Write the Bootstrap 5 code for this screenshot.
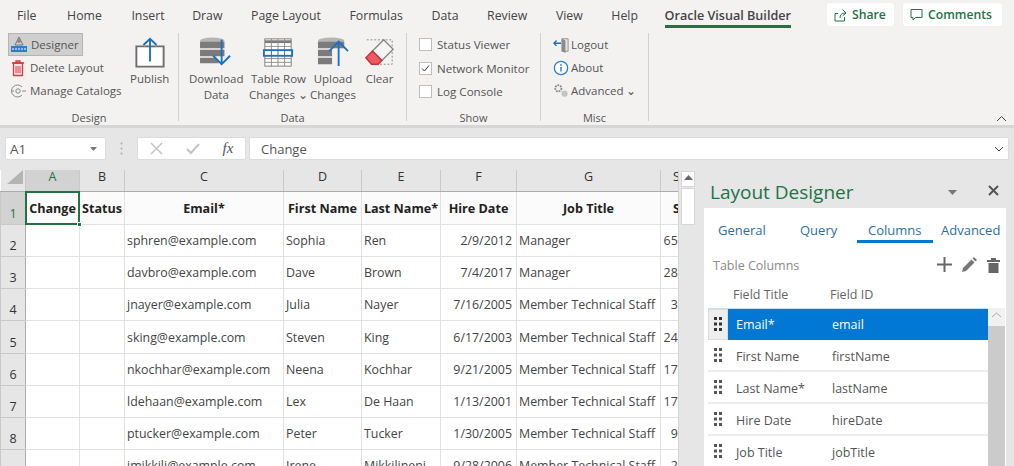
<!DOCTYPE html>
<html lang="en">
<head>
<meta charset="utf-8">
<title>Oracle Visual Builder</title>
<link href="https://cdn.jsdelivr.net/npm/bootstrap@5.3.0/dist/css/bootstrap.min.css" rel="stylesheet">
<style>
html,body{height:466px;overflow:hidden;background:#e6e6e6}
body{font-family:"Open Sans","Noto Sans",sans-serif;font-size:12.5px;color:#444;width:1014px}
.rb{background:#f3f2f1;height:125px;position:relative}
.tabrow{height:32px;padding-left:17px;gap:28.6px;font-size:12.3px;color:#444}
.tabitem{line-height:31px;white-space:nowrap}
.tabitem:nth-child(2){margin-left:2px}
.tabitem:nth-child(3){margin-left:1px}
.tabitem:nth-child(4){margin-left:-1px}
.tabactive{font-weight:600;position:relative;font-size:12.6px;color:#444;margin-left:-2px}
.tabactive::after{content:"";position:absolute;left:0;right:0;top:25px;height:3px;background:#217346}
.topbtn{position:absolute;top:3px;height:23px;background:#fff;border-radius:2px;color:#217346;font-weight:600;font-size:12.2px;gap:5px;padding:0 0 0 7px;line-height:23px;box-shadow:0 0 1px #ddd}
.b-share{left:827px;width:67px}
.b-comm{left:903px;width:99px}
.groups{height:93px}
.grp{height:88px;margin-top:1px;border-right:1px solid #d1d1d1;position:relative;flex:none}
.g1{width:179px}.g2{width:228px}.g3{width:134px}.g4{width:108px}
.glabel{position:absolute;left:0;right:0;top:78px;text-align:center;font-size:11px;color:#555;line-height:14px}
.sm{height:23px;line-height:23px;white-space:nowrap;gap:3px;font-size:11.5px;color:#555}
.smon{background:#cfcfcf;border:1px solid #b4b4b4;width:75px;height:23px;line-height:21px;padding-left:1px;margin-left:8px}
.smoff{margin-left:9px}
.smisc{margin-left:12px;gap:2px}
.big{position:absolute;top:2px;text-align:center;line-height:16px;font-size:11.5px;color:#555;white-space:nowrap}
.big svg{display:block;height:31px;margin:2px auto 3px}
.chk{width:13px;height:13px;border:1px solid #bdbdbd;background:#fff;margin:0 5px 0 12px;flex:none;display:block}
.chkrow{height:23.5px;color:#555;font-size:11.6px;white-space:nowrap}
.rbshadow{height:3px;background:#d6d6d6}
.fbar{height:42px;background:#e6e6e6;position:relative}
.fbox{position:absolute;top:9px;height:23px;background:#fff;border:1px solid #dcdcdc;border-radius:2px;line-height:21px;font-size:13px;color:#555}
.f-name{left:5px;width:101px;padding:1px 0 0 4px;font-size:13.5px}
.f-fx{left:137px;width:109px}
.f-val{left:249px;width:760px;padding:1px 0 0 11px}
.fdots{position:absolute;left:120px;top:14px}
.fxlabel{font-family:"Liberation Serif",serif;font-style:italic;font-size:15px;color:#555}
.main{height:296px}
.sheetwrap{width:678px;height:296px;overflow:hidden;flex:none;background:#fff}
.sheet{table-layout:fixed;border-collapse:collapse;width:706px;font-size:12.4px;color:#444;margin:0}
.sheet th,.sheet td{border:1px solid #e1e1e1;padding:0 2px;white-space:nowrap;overflow:hidden;background:#fff;color:#444;box-shadow:none}
.c0{width:25px}.c1{width:54px}.c2{width:45px}.c3{width:159px}.c4{width:78px}.c5{width:79px}.c6{width:76px}.c7{width:144px}.c8{width:46px}
.sheet .hh th{height:21px;background:#e6e6e6;font-weight:400;text-align:center;border-color:#c9c9c9;border-width:0 1px 1px 0;font-size:12.5px;color:#333;line-height:14px;border-bottom:1px solid #ababab}
.sheet .hh .acol{background:#d2d2d2;color:#217346}
.sheet th.rn{background:#e6e6e6;font-weight:400;text-align:center;vertical-align:bottom;color:#333;border-color:#c9c9c9;padding:0;padding-bottom:1px;border-right:1px solid #ababab;line-height:18px;font-size:12.5px}
.sheet th.rna{background:#d2d2d2;color:#217346}
.sheet .r1 td{height:33px;font-weight:700;color:#222;text-align:center;font-size:12.6px;background:#fbfbfb;vertical-align:middle;padding-top:3px;padding-left:1px;padding-right:1px}
.sheet .rr td{height:32px;vertical-align:top;padding-top:7px;line-height:18px}
.sheet .rr:nth-child(6) td{height:33px;padding-top:8px}
.sheet .num{text-align:right;padding-right:4px}
.sheet .sal{padding-left:0;padding-right:7px;text-align:right}
.sheet .salh{text-align:left!important;padding-left:12px}
.sheet .r1 .salh{padding-left:12px}
.sheet .csel{position:relative;overflow:visible}
.sheet .csel::after{content:"";position:absolute;inset:-1px;border:2px solid #217346}
.sheet .csel::before{content:"";position:absolute;right:-3px;bottom:-3px;width:5px;height:5px;background:#217346;border:1px solid #fff;z-index:2}
.vbar{width:19px;flex:none;background:#e6e6e6;border-left:1px solid #d4d4d4;position:relative}
.vup{height:16px;margin:1px 2px 0;background:#fff;border:1px solid #d6d6d6;text-align:center;line-height:10px}
.vth{height:37px;margin:1px 2px 0;background:#fff;border:1px solid #d6d6d6}
.pane{width:317px;flex:none;background:#e6e6e6;position:relative;padding-left:7px}
.ptitle{height:38px;color:#217346;font-size:19px;line-height:44px;padding-left:6px;position:relative;margin-left:0}
.pmenu{position:absolute;left:244px;top:20px}
.pclose{position:absolute;left:284px;top:15px}
.pbody{background:#fff;width:302px;height:258px;padding:0 0 0 4px}
.ptabs{height:40px;color:#2a6f9f;font-size:13px;position:relative}
.ptab{position:absolute;top:11px;line-height:22px}
.ptabon{position:absolute;left:149px;top:32px;width:76px;height:3px;background:#0078d4}
.ptsub{height:31px;position:relative;color:#8a8a8a;font-size:12.5px;line-height:36px;padding-left:5px}
.ptools{position:absolute;left:229px;top:8px;gap:9px}
.pthead{height:29px;color:#666;position:relative;font-size:12.5px;line-height:32px}
.pthead span,.lrow span{position:absolute}
.pth1{left:25px}.pth2{left:122px}
.lwrap{width:297px;height:160px;position:relative;overflow:hidden}
.lst{width:280px}
.lrow{height:32px;position:relative;border-bottom:2px solid #ececec;line-height:34px;font-size:12.5px;color:#555}
.lgrip{position:absolute;left:6px;top:8px}
.lrow .t1{left:28px}.lrow .t2{left:124px}
.lsel{background:#0078d4;color:#fff;border-bottom:0;border-top:1px solid #c6dff2;line-height:31px}
.lsel .gbox{position:absolute;left:0;top:0;width:20px;height:31px;background:#eee;border:1px solid #dcdcdc}
.lsb{position:absolute;left:280px;top:0;width:17px;height:160px;background:#cbcbcb}
.lsbup{height:18px;background:#f1f1f1;text-align:center;line-height:12px}
.rcaret{position:absolute;left:996px;top:115px}
</style>
</head>
<body>
<div class="rb">
  <div class="tabrow d-flex">
    <div class="tabitem">File</div><div class="tabitem">Home</div><div class="tabitem">Insert</div><div class="tabitem">Draw</div><div class="tabitem">Page Layout</div><div class="tabitem">Formulas</div><div class="tabitem">Data</div><div class="tabitem">Review</div><div class="tabitem">View</div><div class="tabitem">Help</div><div class="tabitem tabactive">Oracle Visual Builder</div>
  </div>
  <div class="topbtn b-share d-flex align-items-center">
    <svg width="13" height="14" viewBox="0 0 13 14" fill="none" stroke="#217346" stroke-width="1"><path d="M1 5.500V13h9.500V9M1 5.500h3M6 10c0-3 1.500-5 5-5M8.500 1.500 12 5 8.500 8"/></svg>Share
  </div>
  <div class="topbtn b-comm d-flex align-items-center">
    <svg width="13" height="13" viewBox="0 0 13 13" fill="none" stroke="#217346" stroke-width="1"><path d="M1 1.500h11v8H5.500L3 12V9.500H1z"/></svg>Comments
  </div>
  <div class="groups d-flex">
    <div class="grp g1">
      <div class="sm smon d-flex align-items-center">
        <svg width="18" height="18" viewBox="0 0 18 18"><path d="M9 1 5 9h8z" fill="none" stroke="#777"/><circle cx="9" cy="5" r="2" fill="#888"/><rect x="1" y="10" width="16" height="6" fill="#2b7cd3"/><path d="M3 12v2M6 12v2M9 12v2M12 12v2M15 12v2" stroke="#fff"/></svg>Designer
      </div>
      <div class="sm smoff d-flex align-items-center">
        <svg width="18" height="18" viewBox="0 0 18 18" fill="none" stroke="#d9393f"><path d="M4.500 4h9v12.500h-9z" fill="#fbe3e3" stroke-width="1.300"/><path d="M3 4h12M7 4V2h4v2" stroke-width="1.300"/><path d="M7 7v7M9 7v7M11 7v7"/></svg>Delete Layout
      </div>
      <div class="sm smoff d-flex align-items-center">
        <svg width="18" height="16" viewBox="0 0 18 16" fill="none" stroke="#8a8a8a"><path d="M2 8h3M13 8h4"/><circle cx="9" cy="8" r="2.200"/><path d="M13 4a6 6 0 1 0 0 8"/></svg>Manage Catalogs
      </div>
      <div class="big" style="left:130px">
        <svg width="32" height="33" viewBox="0 0 32 33"><path d="M10 10H1.500v21.500h29V10H22" fill="#fff" stroke="#6d6d6d" stroke-width="2"/><path d="M10 10h12" stroke="#6d6d6d" stroke-width="2"/><path d="M16 26V2M9 8.500 16 2l7 6.500" fill="none" stroke="#1f6fbf" stroke-width="2"/></svg>
        <div>Publish</div>
      </div>
      <div class="glabel">Design</div>
    </div>
    <div class="grp g2">
      <div class="big" style="left:10px">
        <svg width="36" height="33" viewBox="0 0 36 33"><ellipse cx="14" cy="4" rx="13" ry="3.500" fill="#b5b5b5"/><path d="M1 5h26v7H1zM1 13.500h26v7H1zM1 22h17l3 6H1z" fill="#7b7b7b"/><path d="M24 3v26M15 20l9 9 9-9" fill="none" stroke="#1f6fbf" stroke-width="2"/></svg>
        <div>Download<br>Data</div>
      </div>
      <div class="big" style="left:70px">
        <svg width="32" height="33" viewBox="0 0 32 33"><rect x="2" y="2" width="28" height="29" fill="#fff" stroke="#7b7b7b"/><path d="M2 5h28" stroke="#7b7b7b" stroke-width="3"/><path d="M9 2v29M16 2v29M23 2v29M2 10h28M2 23h28M2 27h28" stroke="#8b8b8b"/><rect x="1" y="14" width="30" height="6" fill="#fff" stroke="#1f6fbf" stroke-width="2"/><path d="M9 14v6M16 14v6M23 14v6" stroke="#1f6fbf"/></svg>
        <div>Table Row<br>Changes ⌄</div>
      </div>
      <div class="big" style="left:131px">
        <svg width="34" height="33" viewBox="0 0 34 33"><ellipse cx="15" cy="4" rx="14" ry="3.500" fill="#b5b5b5"/><path d="M1 5h28v7H1zM1 13.500h15v7H1zM1 22h15v7H1z" fill="#7b7b7b"/><path d="M23 31V5M13 15l10-10 10 10" fill="none" stroke="#1f6fbf" stroke-width="2"/></svg>
        <div>Upload<br>Changes</div>
      </div>
      <div class="big" style="left:184px">
        <svg width="33" height="33" viewBox="0 0 33 33"><path d="M3 3h27v26H14" fill="none" stroke="#888" stroke-dasharray="2 2"/><path d="M21 3 31 13 19 25 9 15z" fill="#f4f4f4" stroke="#888" stroke-width="1.500"/><path d="M9 15 19 25l-4 4H8L2 22z" fill="#ee5a62" stroke="#c5303a" stroke-width="1.500"/></svg>
        <div>Clear</div>
      </div>
      <div class="glabel">Data</div>
    </div>
    <div class="grp g3">
      <div class="chkrow d-flex align-items-center"><span class="chk"></span>Status Viewer</div>
      <div class="chkrow d-flex align-items-center"><span class="chk"><svg class="d-block" width="11" height="11" viewBox="0 0 11 11" fill="none" stroke="#333"><path d="M2 5.500 4.500 8 9 2.500"/></svg></span>Network Monitor</div>
      <div class="chkrow d-flex align-items-center"><span class="chk"></span>Log Console</div>
      <div class="glabel">Show</div>
    </div>
    <div class="grp g4">
      <div class="sm smisc d-flex align-items-center">
        <svg width="16" height="18" viewBox="0 0 18 18"><path d="M10 2h7v14h-7z" fill="#e6e6e6" stroke="#888"/><path d="M10 2l4 2v14l-4-2z" fill="#8c8c8c"/><path d="M9 7H1M4 4 1 7l3 3" fill="none" stroke="#1f6fbf" stroke-width="1.500"/></svg>Logout
      </div>
      <div class="sm smisc d-flex align-items-center">
        <svg width="16" height="18" viewBox="0 0 18 18"><circle cx="9" cy="9" r="7.500" fill="#fff" stroke="#2b7cd3" stroke-width="1.400"/><path d="M9 8v5" stroke="#2b7cd3" stroke-width="1.600"/><circle cx="9" cy="5.500" r="1" fill="#2b7cd3"/></svg>About
      </div>
      <div class="sm smisc d-flex align-items-center">
        <svg width="16" height="18" viewBox="0 0 18 18"><circle cx="6" cy="6" r="3.500" fill="none" stroke="#888" stroke-width="2" stroke-dasharray="2 1"/><circle cx="13" cy="12" r="3.500" fill="#c4c4c4"/></svg>Advanced ⌄
      </div>
      <div class="glabel">Misc</div>
    </div>
  </div>
  <svg class="rcaret" width="11" height="7" viewBox="0 0 11 7" fill="none" stroke="#444"><path d="m1 6 4.500-4.500L10 6"/></svg>
</div>
<div class="rbshadow"></div>
<div class="fbar">
  <div class="fbox f-name d-flex justify-content-between align-items-center">A1<svg class="me-2" width="7" height="4" viewBox="0 0 7 4"><path d="M0 0h7L3.500 4z" fill="#777"/></svg></div>
  <svg class="fdots" width="3" height="13" viewBox="0 0 3 13" fill="#aaa"><circle cx="1.500" cy="1.500" r="1"/><circle cx="1.500" cy="6.500" r="1"/><circle cx="1.500" cy="11.500" r="1"/></svg>
  <div class="fbox f-fx d-flex align-items-center justify-content-around">
    <svg width="13" height="13" viewBox="0 0 13 13" stroke="#c4c4c4" stroke-width="1.500"><path d="m1 1 11 11M12 1 1 12"/></svg>
    <svg width="14" height="12" viewBox="0 0 14 12" fill="none" stroke="#c4c4c4" stroke-width="2"><path d="m1 6 4 4 8-9"/></svg>
    <span class="fxlabel">fx</span>
  </div>
  <div class="fbox f-val d-flex justify-content-between align-items-center">Change<svg class="me-1" width="10" height="6" viewBox="0 0 10 6" fill="none" stroke="#444"><path d="m1 1 4 4 4-4"/></svg></div>
</div>
<div class="main d-flex">
  <div class="sheetwrap">
    <table class="table sheet">
      <colgroup><col class="c0"><col class="c1"><col class="c2"><col class="c3"><col class="c4"><col class="c5"><col class="c6"><col class="c7"><col class="c8"></colgroup>
      <tbody>
      <tr class="hh"><th><svg class="d-block ms-1" width="16" height="14" viewBox="0 0 16 14"><path d="M16 0v14H0z" fill="#b4b4b4"/></svg></th><th class="acol">A</th><th>B</th><th>C</th><th>D</th><th>E</th><th>F</th><th>G</th><th class="salh">S</th></tr>
      <tr class="r1"><th class="rn rna">1</th><td class="csel">Change</td><td>Status</td><td>Email*</td><td>First Name</td><td>Last Name*</td><td>Hire Date</td><td>Job Title</td><td class="salh">Salary</td></tr>
      <tr class="rr"><th class="rn">2</th><td></td><td></td><td>sphren@example.com</td><td>Sophia</td><td>Ren</td><td class="num">2/9/2012</td><td>Manager</td><td class="sal">65000</td></tr>
      <tr class="rr"><th class="rn">3</th><td></td><td></td><td>davbro@example.com</td><td>Dave</td><td>Brown</td><td class="num">7/4/2017</td><td>Manager</td><td class="sal">28000</td></tr>
      <tr class="rr"><th class="rn">4</th><td></td><td></td><td>jnayer@example.com</td><td>Julia</td><td>Nayer</td><td class="num">7/16/2005</td><td>Member Technical Staff</td><td class="sal">3200</td></tr>
      <tr class="rr"><th class="rn">5</th><td></td><td></td><td>sking@example.com</td><td>Steven</td><td>King</td><td class="num">6/17/2003</td><td>Member Technical Staff</td><td class="sal">24000</td></tr>
      <tr class="rr"><th class="rn">6</th><td></td><td></td><td>nkochhar@example.com</td><td>Neena</td><td>Kochhar</td><td class="num">9/21/2005</td><td>Member Technical Staff</td><td class="sal">17000</td></tr>
      <tr class="rr"><th class="rn">7</th><td></td><td></td><td>ldehaan@example.com</td><td>Lex</td><td>De Haan</td><td class="num">1/13/2001</td><td>Member Technical Staff</td><td class="sal">17000</td></tr>
      <tr class="rr"><th class="rn">8</th><td></td><td></td><td>ptucker@example.com</td><td>Peter</td><td>Tucker</td><td class="num">1/30/2005</td><td>Member Technical Staff</td><td class="sal">9000</td></tr>
      <tr class="rr"><th class="rn">9</th><td></td><td></td><td>imikkili@example.com</td><td>Irene</td><td>Mikkilineni</td><td class="num">9/28/2006</td><td>Member Technical Staff</td><td class="sal">2700</td></tr>
      </tbody>
    </table>
  </div>
  <div class="vbar">
    <div class="vup"><svg width="9" height="5" viewBox="0 0 9 5"><path d="M0 5h9L4.500 0z" fill="#666"/></svg></div>
    <div class="vth"></div>
  </div>
  <div class="pane">
    <div class="ptitle">Layout Designer
      <svg class="pmenu" width="9" height="5" viewBox="0 0 9 5"><path d="M0 0h9L4.500 5z" fill="#777"/></svg>
      <svg class="pclose" width="11" height="11" viewBox="0 0 11 11" stroke="#555" stroke-width="2"><path d="m1 1 9 9M10 1l-9 9"/></svg>
    </div>
    <div class="pbody">
      <div class="ptabs">
        <span class="ptab" style="left:10px">General</span><span class="ptab" style="left:92px">Query</span><span class="ptab" style="left:160px">Columns</span><span class="ptab" style="left:233px">Advanced</span>
        <div class="ptabon"></div>
      </div>
      <div class="ptsub">Table Columns
        <div class="ptools d-flex align-items-center">
          <svg width="15" height="15" viewBox="0 0 15 15" stroke="#666" stroke-width="2"><path d="M7.500 0v15M0 7.500h15"/></svg>
          <svg width="17" height="17" viewBox="0 0 17 17" fill="#777"><path d="M13 1 16 4 14.500 5.500 11.500 2.500zM10.500 3.500l3 3L5 15l-4 1 1-4z"/></svg>
          <svg width="13" height="16" viewBox="0 0 13 16" fill="#666"><path d="M0 3h13v2H0zM4 1h5v2H4zM1.500 6h10v10h-10z"/></svg>
        </div>
      </div>
      <div class="pthead"><span class="pth1">Field Title</span><span class="pth2">Field ID</span></div>
      <div class="lwrap">
        <div class="lst">
          <div class="lrow lsel"><div class="gbox"></div><svg class="lgrip" width="8" height="14" viewBox="0 0 8 14" fill="#333"><path d="M0 0h3v3H0zM5 0h3v3H5zM0 5.500h3v3H0zM5 5.500h3v3H5zM0 11h3v3H0zM5 11h3v3H5z"/></svg><span class="t1">Email*</span><span class="t2">email</span></div>
          <div class="lrow"><svg class="lgrip" width="8" height="14" viewBox="0 0 8 14" fill="#555"><path d="M0 0h3v3H0zM5 0h3v3H5zM0 5.500h3v3H0zM5 5.500h3v3H5zM0 11h3v3H0zM5 11h3v3H5z"/></svg><span class="t1">First Name</span><span class="t2">firstName</span></div>
          <div class="lrow"><svg class="lgrip" width="8" height="14" viewBox="0 0 8 14" fill="#555"><path d="M0 0h3v3H0zM5 0h3v3H5zM0 5.500h3v3H0zM5 5.500h3v3H5zM0 11h3v3H0zM5 11h3v3H5z"/></svg><span class="t1">Last Name*</span><span class="t2">lastName</span></div>
          <div class="lrow"><svg class="lgrip" width="8" height="14" viewBox="0 0 8 14" fill="#555"><path d="M0 0h3v3H0zM5 0h3v3H5zM0 5.500h3v3H0zM5 5.500h3v3H5zM0 11h3v3H0zM5 11h3v3H5z"/></svg><span class="t1">Hire Date</span><span class="t2">hireDate</span></div>
          <div class="lrow"><svg class="lgrip" width="8" height="14" viewBox="0 0 8 14" fill="#555"><path d="M0 0h3v3H0zM5 0h3v3H5zM0 5.500h3v3H0zM5 5.500h3v3H5zM0 11h3v3H0zM5 11h3v3H5z"/></svg><span class="t1">Job Title</span><span class="t2">jobTitle</span></div>
        </div>
        <div class="lsb"><div class="lsbup"><svg width="11" height="6" viewBox="0 0 11 6" fill="none" stroke="#aaa"><path d="m1 5 4.500-4L10 5"/></svg></div></div>
      </div>
    </div>
  </div>
</div>
</body>
</html>
